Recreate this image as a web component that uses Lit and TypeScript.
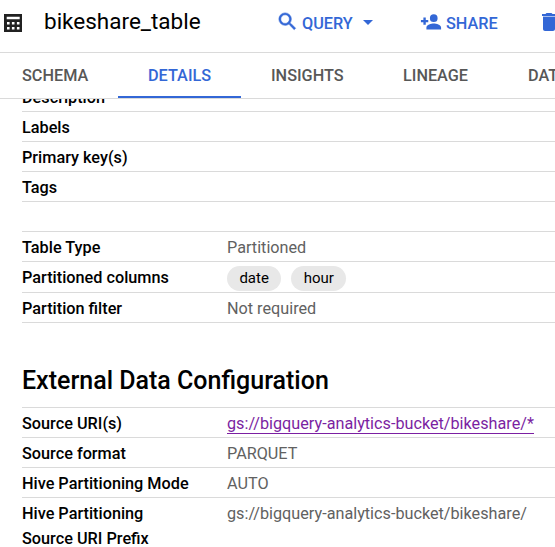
import { LitElement, html, css, svg } from "lit";
import { customElement } from "lit/decorators.js";

type Row = { label: string; kind?: string; value?: unknown };

const GENERAL: Row[] = [
  { label: "Description", kind: "first" },
  { label: "Labels" },
  { label: "Primary key(s)" },
  { label: "Tags" },
  { label: "" },
];

const PARTITION: Row[] = [
  { label: "Table Type", value: "Partitioned" },
  {
    label: "Partitioned columns",
    kind: "tall",
    value: html`<span class="chip">date</span><span class="chip">hour</span>`,
  },
  { label: "Partition filter", value: "Not required" },
];

const EXTERNAL: Row[] = [
  { label: "Source URI(s)", value: html`<a class="link">gs://bigquery-analytics-bucket/bikeshare/*</a>` },
  { label: "Source format", value: "PARQUET" },
  { label: "Hive Partitioning Mode", value: "AUTO" },
  { label: "Hive Partitioning Source URI Prefix", kind: "multi", value: "gs://bigquery-analytics-bucket/bikeshare/" },
];

const TABS = ["schema", "details", "insights", "lineage", "data"];

const tableIcon = svg`<path fill-rule="evenodd" d="M0 0h18v18H0zM2.700 2.700v2.600h13V2.700zM3 8v2.600h2.600V8zM7.900 8v2.600h2.600V8zM12.900 8v2.600h2.600V8zM3 13v2.600h2.600V13zM7.900 13v2.600h2.600V13zM12.900 13v2.600h2.600V13z"/>`;

@customElement("app-root")
export class AppRoot extends LitElement {
  static styles = css`
    :host { display: flex; flex-direction: column; width: 555px; height: 547px; overflow: hidden; background: #fff; color: #000; font: 400 16.25px/25px Roboto, sans-serif; }
    * { box-sizing: border-box; }
    .header { display: flex; align-items: flex-start; flex: none; height: 53px; border-bottom: 1px solid #dadada; white-space: nowrap; overflow: hidden; }
    .header > * { flex: none; }
    svg { display: block; flex: none; }
    .table-icon { margin: 14px 0 0 4px; fill: #212121; }
    .title { width: 234px; margin: 6px 0 0 22px; font-size: 22.5px; line-height: 30px; }
    .action { display: flex; align-items: flex-start; color: #3367d6; fill: #3367d6; font-weight: 500; }
    .action span { margin-top: 11px; }
    .query { width: 142px; }
    .query span { width: 51px; margin-left: 3px; }
    .search { margin: 10px 0 0 -2px; stroke: #3367d6; stroke-width: 0.6px; }
    .caret { margin: 20px 0 0 10px; }
    .share { width: 117px; }
    .person { margin-top: 11px; }
    .share span { margin-left: 4px; }
    .trash { margin-top: 10px; fill: #3367d6; }
    .lid-gap { fill: #a9c0ee; }
    .tabs { display: flex; flex: none; height: 46px; border-bottom: 1px solid #dadada; font-weight: 500; line-height: 45px; color: #575757; overflow: hidden; }
    .tab { flex: none; text-transform: uppercase; height: 45px; }
    .schema { width: 118px; padding-left: 22px; }
    .details { width: 123px; padding-left: 30px; color: #3367d6; box-shadow: inset 0 -2px #3367d6; }
    .insights { width: 132px; padding-left: 30px; }
    .lineage { width: 125px; padding-left: 30px; }
    .data { padding-left: 30px; }
    .content { flex: 1; min-height: 0; overflow: hidden; padding-left: 22px; display: flex; flex-direction: column; }
    .row { display: flex; flex: none; height: 30px; border-bottom: 1px solid #dadada; padding-top: 3px; }
    .first { margin-top: -17px; }
    .tall { height: 31px; }
    .multi { height: 60px; border: 0; }
    .label { width: 175px; margin-right: 30px; font-weight: 500; }
    .value { display: flex; align-items: flex-start; color: #616161; white-space: nowrap; font-size: 16.22px; }
    .chip { height: 25px; border-radius: 13px; padding: 0 12.4px; margin: 1px 10px 0 0; background: #e8e8e8; color: #000; font-size: 15px; line-height: 24px; }
    .link { color: #7b1fa2; height: 23px; border-bottom: 1px solid #7b1fa2; }
    .heading { flex: none; margin: 0; height: 85px; padding-top: 42px; border-bottom: 1px solid #dadada; font-size: 25px; line-height: 32px; font-weight: 500; }
  `;

  private rows(list: Row[]) {
    return list.map((r) => html`<div class="row ${r.kind ?? ""}"><div class="label">${r.label}</div><div class="value">${r.value}</div></div>`);
  }

  render() {
    return html`
      <div class="header">
        <svg class="table-icon" width="18" height="18" viewBox="0 0 18 18">${tableIcon}</svg>
        <div class="title">bikeshare_table</div>
        <div class="action query">
          <svg class="search" width="23" height="23" viewBox="0 0 24 24"><path d="M15.500 14h-.79l-.28-.27A6.470 6.470 0 0 0 16 9.500 6.500 6.500 0 1 0 9.500 16c1.610 0 3.090-.59 4.230-1.570l.27.28v.79l5 4.990L20.490 19zM9.500 14a4.500 4.500 0 1 1 0-9 4.500 4.500 0 0 1 0 9z"/></svg>
          <span>QUERY</span>
          <svg class="caret" width="10" height="5" viewBox="0 0 10 5"><path d="M0 0h10L5 5z"/></svg>
        </div>
        <div class="action share">
          <svg class="person" width="22" height="22" viewBox="0 0 24 24"><path d="M15 12a4.200 4.200 0 1 0 0-8.400 4.200 4.200 0 0 0 0 8.400zm-8.700-2.300V7H3.700v2.700H1v2.600h2.700V15h2.600v-2.700H9V9.700zM15 13.700c-2.670 0-8 1.340-8 4.300v2.300h16V18c0-2.960-5.330-4.300-8-4.300z"/></svg>
          <span>SHARE</span>
        </div>
        <svg class="trash" width="24" height="24" viewBox="0 0 24 24"><path class="lid-gap" d="M6 6h12v1H6z"/><path d="M6 19c0 1.100.9 2 2 2h8c1.100 0 2-.9 2-2V7H6zM19 4h-3.500l-1-1h-5l-1 1H5v2h14z"/></svg>
      </div>
      <div class="tabs">${TABS.map((t) => html`<div class="tab ${t}">${t}</div>`)}</div>
      <div class="content">
        ${this.rows(GENERAL)} ${this.rows(PARTITION)}
        <h2 class="heading">External Data Configuration</h2>
        ${this.rows(EXTERNAL)}
      </div>
    `;
  }
}
